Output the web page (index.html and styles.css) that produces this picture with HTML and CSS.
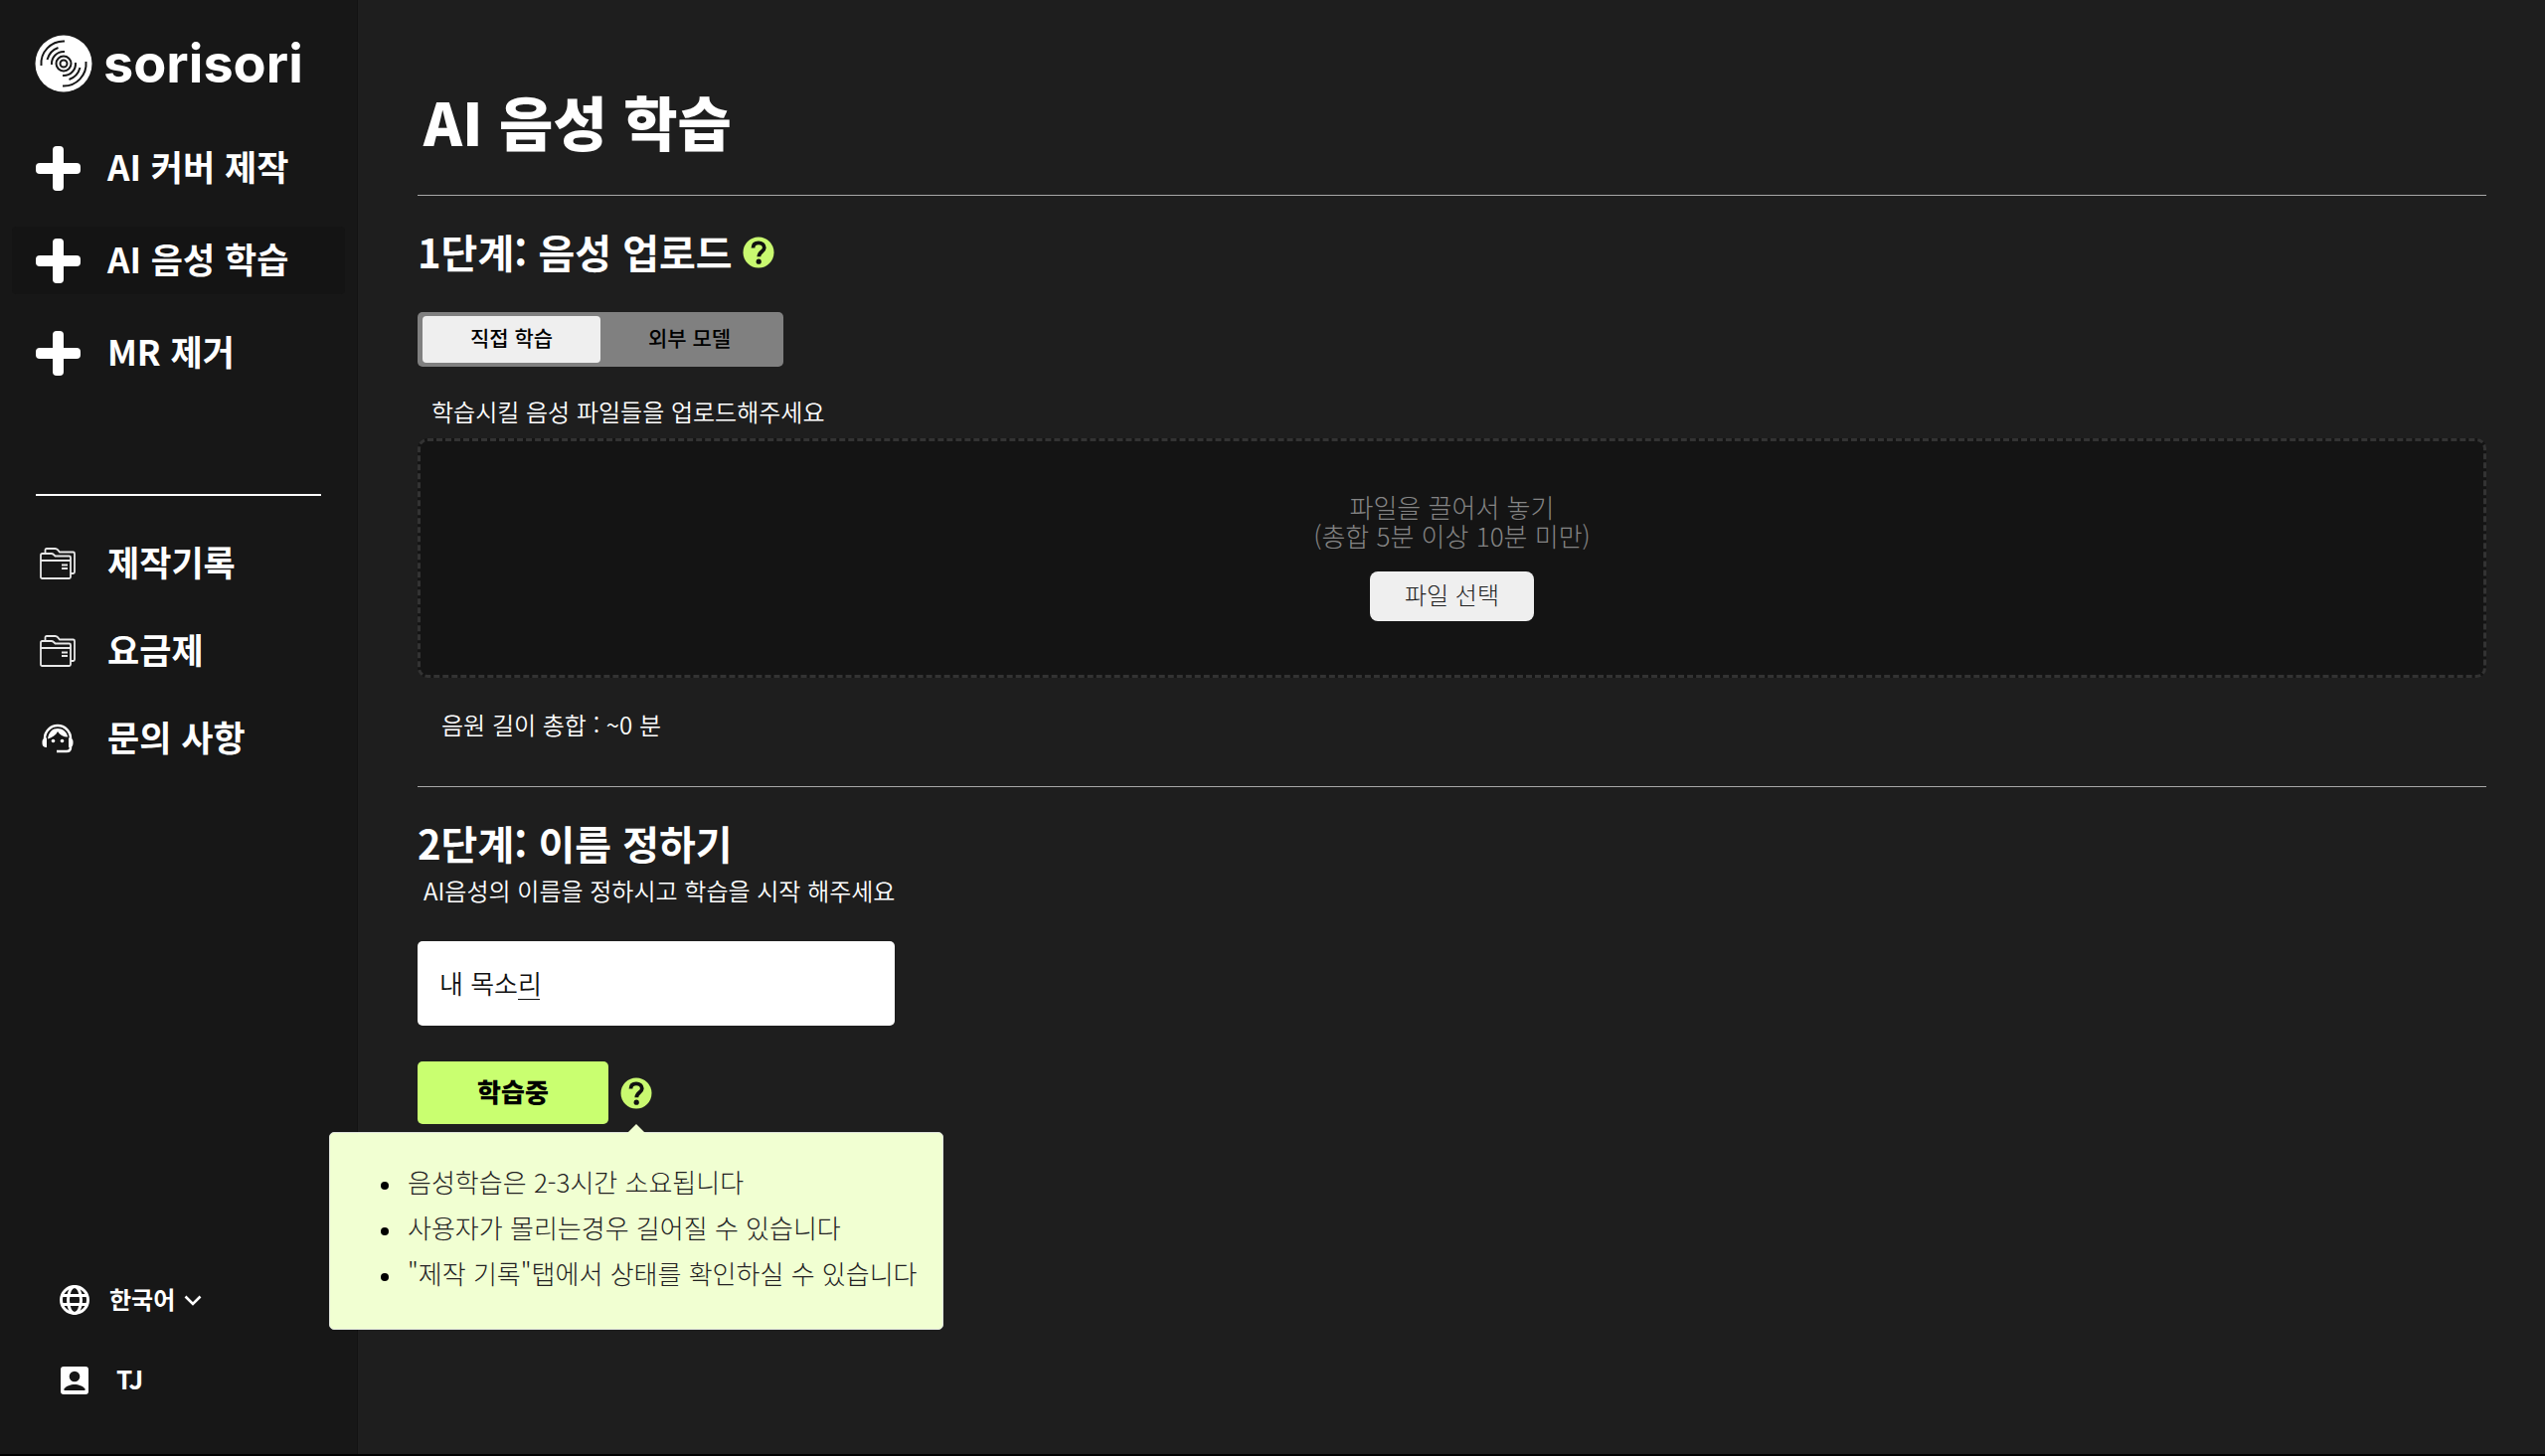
FILE: index.html
```html
<!DOCTYPE html>
<html lang="ko">
<head>
    <meta charset="UTF-8">
    <meta name="viewport" content="width=device-width, initial-scale=1.0">
    <title>sorisori - AI 음성 학습</title>
    <link rel="stylesheet" href="styles.css">
</head>
<body>
    <!-- shared icons -->
    <svg class="sprite" aria-hidden="true">
        <symbol id="icon-plus" viewBox="0 0 45 45">
            <rect x="17" y="0" width="11" height="45" rx="4"/>
            <rect x="0" y="17" width="45" height="11" rx="4"/>
        </symbol>
        <symbol id="icon-folder" viewBox="0 0 36 32">
            <path d="M1 30V7.500Q1 6 2.500 6H11.500Q13 6 14 7L15.500 8.500H29.500Q31 8.500 31 10V29.500Q31 31 29.500 31H2.500Q1 31 1 29.500Z M1 13H31 M5.500 6V2.500Q5.500 1 7 1H15.500Q17 1 18 2.200L20 4.500H33.500Q35 4.500 35 6V24.500Q35 26 33.500 26H31 M22 17.500H28 M22 21H28" fill="none" stroke="#e8e8e8" stroke-width="1.800"/>
        </symbol>
        <symbol id="icon-help" viewBox="0 0 32 32">
            <circle cx="16" cy="16" r="15.500" fill="#c9f970"/>
            <path d="M10.500 11.500C10.500 7.500 13 6.300 16 6.300C19.300 6.300 21.800 8.200 21.800 11.200C21.800 15.200 16.300 15.500 16.300 20.300" fill="none" stroke="#111" stroke-width="3.800"/>
            <circle cx="16.200" cy="25.200" r="2.600" fill="#111"/>
        </symbol>
    </svg>

    <div class="app">
        <aside class="sidebar">
            <a href="#" class="logo">
                <svg class="logo-mark" viewBox="0 0 58 58" fill="none" stroke="#171717" stroke-width="2">
                    <circle cx="29" cy="29" r="28.500" fill="#fff" stroke="none"/>
                    <circle cx="29" cy="29" r="3.500"/>
                    <circle cx="29" cy="29" r="7.500"/>
                    <path d="M6.500 31A22.500 22.500 0 0 1 30 6.500M51.500 27A22.500 22.500 0 0 1 28 51.500"/>
                    <path d="M12.500 25A17.500 17.500 0 0 1 23.500 13M45.500 33A17.500 17.500 0 0 1 34.500 45"/>
                    <path d="M17 30A12 12 0 0 1 30 17M41 28A12 12 0 0 1 28 41"/>
                </svg>
                <span>sorisori</span>
            </a>

            <nav class="menu">
                <a href="#" class="menu-item"><svg class="icon-plus"><use href="#icon-plus"/></svg><span>AI 커버 제작</span></a>
                <a href="#" class="menu-item active"><svg class="icon-plus"><use href="#icon-plus"/></svg><span>AI 음성 학습</span></a>
                <a href="#" class="menu-item"><svg class="icon-plus"><use href="#icon-plus"/></svg><span>MR 제거</span></a>
            </nav>

            <hr class="menu-divider">

            <nav class="menu menu-sub">
                <a href="#" class="menu-item"><svg class="icon-folder"><use href="#icon-folder"/></svg><span>제작기록</span></a>
                <a href="#" class="menu-item"><svg class="icon-folder"><use href="#icon-folder"/></svg><span>요금제</span></a>
                <a href="#" class="menu-item">
                    <svg class="icon-folder" viewBox="0 0 36 32">
                        <path d="M5 19V16A13 13 0 0 1 31 16V25Q31 29 27 29H17" fill="none" stroke="#fff" stroke-width="2.500"/>
                        <path d="M6 15.500Q2.500 16 2.500 19V21Q2.500 24.500 6 25H7V15.500ZM30 15.500Q33.500 16 33.500 19V21Q33.500 24.500 30 25H29V15.500Z" fill="#fff"/>
                        <path d="M8 16.500C9 9 13 6 18 6C23 6 27 9 28.200 14.500C23.500 14.500 20 12.500 18 9C16.500 12.500 12.500 15 8 16.500Z" fill="#fff"/>
                        <circle cx="13.500" cy="18.500" r="1.800" fill="#fff"/>
                        <circle cx="22.500" cy="18.500" r="1.800" fill="#fff"/>
                    </svg>
                    <span>문의 사항</span>
                </a>
            </nav>

            <div class="account">
                <div class="account-row">
                    <svg class="icon-account" viewBox="0 0 30 30" fill="none" stroke="#fff" stroke-width="3">
                        <circle cx="15" cy="15" r="13.500"/>
                        <ellipse cx="15" cy="15" rx="6.500" ry="13.500"/>
                        <path d="M2.500 10.500H27.500M2.500 19.500H27.500"/>
                    </svg>
                    <select class="language" aria-label="언어">
                        <option>한국어</option>
                        <option>English</option>
                    </select>
                    <svg class="icon-chevron" viewBox="0 0 18 11"><path d="M1.500 1.500L9 9L16.500 1.500" fill="none" stroke="#fff" stroke-width="2.600"/></svg>
                </div>
                <a href="#" class="account-row user">
                    <svg class="icon-account" viewBox="0 0 30 30">
                        <rect x="1" y="1" width="28" height="28" rx="3" fill="#fff"/>
                        <circle cx="15" cy="11" r="5.300" fill="#171717"/>
                        <path d="M4.500 25V23.500C6.500 20.500 11 19 15 19C19 19 23.500 20.500 25.500 23.500V25Z" fill="#171717"/>
                    </svg>
                    <span>TJ</span>
                </a>
            </div>
        </aside>

        <main class="content">
            <h1>AI 음성 학습</h1>

            <section class="step">
                <h2>1단계: 음성 업로드
                    <button class="help" aria-label="도움말"><svg><use href="#icon-help"/></svg></button>
                </h2>
                <div class="tabs">
                    <button class="tab active">직접 학습</button>
                    <button class="tab">외부 모델</button>
                </div>
                <p class="upload-label">학습시킬 음성 파일들을 업로드해주세요</p>
                <div class="dropzone">
                    <p>파일을 끌어서 놓기<br>(총합 5분 이상 10분 미만)</p>
                    <button class="file-button">파일 선택</button>
                </div>
                <p class="total">음원 길이 총합 : ~0 분</p>
            </section>

            <section class="step">
                <h2>2단계: 이름 정하기</h2>
                <label class="name-label" for="voice-name">AI음성의 이름을 정하시고 학습을 시작 해주세요</label>
                <div class="name-field">
                    <input type="text" id="voice-name" value="내 목소리">
                    <span class="composing"></span>
                </div>
                <div class="actions">
                    <button class="train-button">학습중</button>
                    <div class="help-wrap">
                        <button class="help" aria-label="학습 도움말" aria-describedby="train-tip"><svg><use href="#icon-help"/></svg></button>
                        <div class="tooltip" id="train-tip" role="tooltip">
                            <ul>
                                <li>음성학습은 2-3시간 소요됩니다</li>
                                <li>사용자가 몰리는경우 길어질 수 있습니다</li>
                                <li>"제작 기록"탭에서 상태를 확인하실 수 있습니다</li>
                            </ul>
                        </div>
                    </div>
                </div>
            </section>
        </main>
    </div>
</body>
</html>
```
FILE: styles.css
```css
* {
    box-sizing: border-box;
}

body {
    margin: 0;
    background: #1e1e1e;
    color: #fff;
    font-family: "Noto Sans CJK KR", sans-serif;
    font-size: 24px;
    line-height: 30px;
}

h1, h2, p, ul {
    margin: 0;
}

a {
    color: inherit;
    text-decoration: none;
}

button, input, select {
    font-family: inherit;
    border: none;
    padding: 0;
}

button {
    cursor: pointer;
}

.sprite {
    display: none;
}

.app {
    display: flex;
    min-height: 100vh;
    border-bottom: 2px solid #000;
}

/* sidebar */
.sidebar {
    flex: 0 0 360px;
    display: flex;
    flex-direction: column;
    padding: 35px 12px 32px;
    background: #171717;
    border-right: 1px solid #121212;
}

.logo {
    display: flex;
    align-items: center;
    gap: 11px;
    padding-left: 23px;
    height: 58px;
    font-family: Inter, sans-serif;
    font-size: 54px;
    font-weight: 700;
}

.logo-mark {
    width: 58px;
    height: 58px;
}

.menu {
    display: flex;
    flex-direction: column;
    gap: 25px;
    margin-top: 42px;
}

.menu-item {
    display: flex;
    align-items: center;
    gap: 27px;
    height: 68px;
    padding-left: 24px;
    border-radius: 4px;
    font-size: 35px;
    font-weight: 700;
}

.menu-item span,
.user span {
    padding-bottom: 4px;
}

.menu-item.active {
    background: #141414;
}

.icon-plus {
    width: 45px;
    height: 45px;
    fill: #fff;
}

.menu-divider {
    width: 287px;
    height: 2px;
    margin: 108px 24px 0;
    border: none;
    background: #fff;
}

.menu-sub {
    gap: 20px;
    margin-top: 34px;
}

.menu-sub .menu-item {
    padding-left: 28px;
    gap: 32px;
}

.icon-folder {
    width: 36px;
    height: 32px;
}

.account {
    display: flex;
    flex-direction: column;
    gap: 41px;
    margin-top: auto;
    padding: 0 24px 22px 48px;
    font-weight: 700;
}

.account-row {
    display: flex;
    align-items: center;
    height: 40px;
}

.icon-account {
    width: 30px;
    height: 30px;
}

.language {
    appearance: none;
    width: 68px;
    margin: 0 7px 0 20px;
    padding-bottom: 4px;
    background: none;
    color: #fff;
    font-size: 24px;
    font-weight: 700;
}

.icon-chevron {
    width: 18px;
    height: 11px;
}

.user {
    gap: 27px;
    font-size: 26px;
}

/* content */
.content {
    flex: 1;
    padding: 82px 59px 60px 60px;
}

h1 {
    padding: 0 6px 34px;
    font-size: 59px;
    font-weight: 900;
    line-height: 80px;
}

.step {
    border-top: 1px solid #a8a8a8;
    padding: 31px 0 46px;
}

h2 {
    display: flex;
    align-items: center;
    gap: 10px;
    font-size: 40px;
    font-weight: 700;
    line-height: 50px;
}

.help {
    display: block;
    width: 32px;
    height: 32px;
    background: none;
}

.help svg {
    display: block;
    width: 32px;
    height: 32px;
}

h2 .help {
    margin-top: 2px;
}

.tabs {
    display: flex;
    width: 368px;
    margin-top: 36px;
    padding: 4px 5px;
    border-radius: 5px;
    background: #808080;
}

.tab {
    flex: 1;
    height: 47px;
    padding-bottom: 5px;
    border-radius: 4px;
    background: none;
    color: #000;
    font-size: 21px;
    font-weight: 500;
}

.tab.active {
    background: #efefef;
}

.upload-label {
    margin-top: 30px;
    padding: 0 14px;
    font-weight: 350;
}

.dropzone {
    display: flex;
    flex-direction: column;
    align-items: center;
    gap: 22px;
    margin-top: 12px;
    padding: 51px 20px 54px;
    border: 3px dashed #333;
    border-radius: 10px;
    background: #141414;
    color: #858585;
    font-size: 26px;
    font-weight: 300;
    line-height: 29px;
    text-align: center;
}

.file-button {
    width: 165px;
    height: 50px;
    padding-bottom: 5px;
    border-radius: 8px;
    background: #efefef;
    color: #222;
    font-size: 24px;
    font-weight: 300;
}

.total {
    margin-top: 32px;
    padding: 0 24px 1px;
    font-weight: 350;
}

.name-label {
    display: block;
    margin-top: 8px;
    padding: 0 6px;
    font-weight: 350;
}

.name-field {
    position: relative;
    width: 480px;
    margin-top: 36px;
}

.name-field input {
    display: block;
    width: 100%;
    height: 85px;
    padding: 0 22px 2px;
    border-radius: 5px;
    background: #fff;
    color: #111;
    font-size: 26px;
    font-weight: 350;
}

/* IME underline below the last syllable */
.composing {
    position: absolute;
    left: 101px;
    top: 58px;
    width: 22px;
    height: 1px;
    background: #111;
}

.actions {
    display: flex;
    align-items: center;
    gap: 12px;
    margin-top: 36px;
}

.train-button {
    width: 192px;
    height: 63px;
    padding-bottom: 4px;
    border-radius: 5px;
    background: #c9ff70;
    color: #000;
    font-size: 26px;
    font-weight: 900;
}

.help-wrap {
    position: relative;
}

.tooltip {
    position: absolute;
    top: 55px;
    left: 50%;
    transform: translateX(-50%);
    width: 618px;
    padding: 26px 32px 33px 38px;
    border: 1px solid #dfe3dc;
    border-radius: 5px;
    background: #f1ffd2;
    color: #222;
    font-size: 26px;
    font-weight: 300;
    line-height: 46px;
    white-space: nowrap;
}

.tooltip::before {
    content: "";
    position: absolute;
    top: -9px;
    left: 50%;
    margin-left: -9px;
    border-left: 9px solid transparent;
    border-right: 9px solid transparent;
    border-bottom: 9px solid #f1ffd2;
}

.tooltip ul {
    padding-left: 35px;
}

.tooltip li {
    padding-left: 5px;
}

.tooltip li::marker {
    font-size: 20px;
    color: #000;
}
```
